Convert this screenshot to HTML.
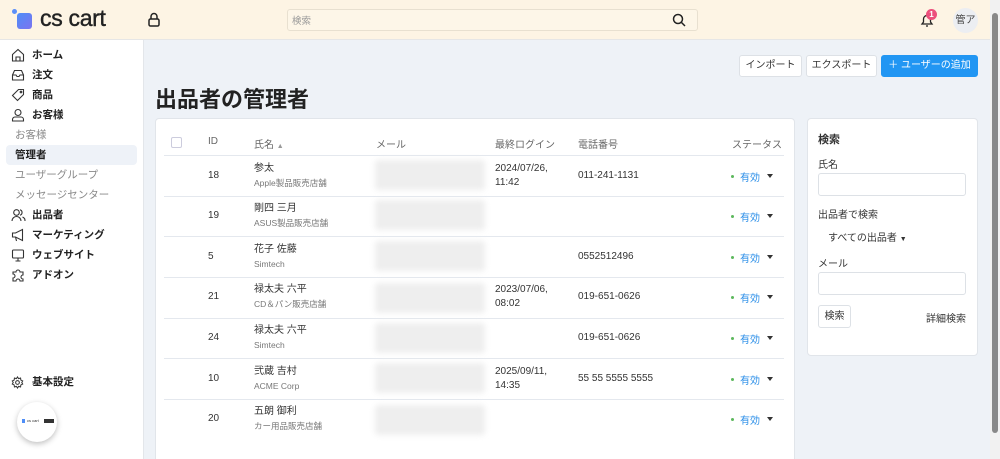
<!DOCTYPE html>
<html style="width:1000px;height:459px;overflow:hidden"><head><meta charset="utf-8">
<style>
*{box-sizing:border-box;margin:0;padding:0}
body{width:1000px;height:459px;overflow:hidden;font-family:"Liberation Sans","Noto Sans CJK JP",sans-serif;background:#eef2f7;color:#333;position:relative;font-size:10px}
.abs{position:absolute}
#hdr{left:0;top:0;width:990px;height:40px;background:#fdf4e4;border-bottom:1px solid #e6e6e6}
#side{left:0;top:40px;width:144px;height:419px;background:#fff;border-right:1px solid #e3e6ea}
.nav{position:absolute;left:32px;font-size:10.5px;font-weight:bold;color:#222;line-height:14px}
.sub{position:absolute;left:15px;font-size:10.5px;color:#888;line-height:14px}
.ic{position:absolute;left:11px}
.card{background:#fff;border:1px solid #e1e5ea;border-radius:4px}
.th{position:absolute;top:136px;font-size:10px;color:#666}
.row{position:absolute;left:164px;width:620px;height:1px;background:#e4e8ee}
.c{position:absolute;font-size:10px;color:#333;line-height:14px}
.s{font-size:8.5px;color:#777}
.blur{position:absolute;left:375px;width:110px;height:30px;background:#eee;filter:blur(3px);border-radius:3px}
.st{position:absolute;left:731px;font-size:10px;color:#2a8ee8}
.st:before{content:"";position:absolute;left:0;top:6px;width:3px;height:3px;border-radius:50%;background:#5cb85c}
.st span{margin-left:9px}
.st i{position:absolute;left:36px;top:5px;border:3px solid transparent;border-top:4px solid #333}
.btn{position:absolute;top:55px;height:22px;background:#fff;border:1px solid #dde1e6;border-radius:3px;font-size:10px;line-height:20px;text-align:center;color:#333}
.inp{position:absolute;left:818px;width:148px;height:23px;border:1px solid #dde1e6;border-radius:3px;background:#fff}
.lbl{position:absolute;left:818px;font-size:10px;color:#333}
</style></head><body>
<div id="hdr" class="abs">
  <div class="abs" style="left:12px;top:9px;width:5px;height:5px;border-radius:50%;background:#5b8ff9"></div>
  <div class="abs" style="left:17px;top:13px;width:15px;height:16px;border-radius:3px;background:linear-gradient(135deg,#4f8ef7,#7b73f0)"></div>
  <div class="abs" style="left:40px;top:5px;font-size:23px;color:#222;letter-spacing:-0.3px;-webkit-text-stroke:0.4px #222">cs cart</div>
  <svg class="abs" style="left:147px;top:12px" width="14" height="16" viewBox="0 0 14 16"><rect x="2" y="7" width="10" height="7" rx="1.5" fill="none" stroke="#222" stroke-width="1.5"/><path d="M4 7V4.5a3 3 0 0 1 6 0V7" fill="none" stroke="#222" stroke-width="1.5"/></svg>
  <div class="abs" style="left:287px;top:9px;width:411px;height:22px;border:1px solid #e8e0d0;border-radius:3px;background:#fdf6e8"></div>
  <div class="abs" style="left:292px;top:13px;font-size:9.5px;color:#999">検索</div>
  <svg class="abs" style="left:672px;top:13px" width="14" height="14" viewBox="0 0 14 14"><circle cx="6" cy="6" r="4.5" fill="none" stroke="#222" stroke-width="1.5"/><path d="M9.5 9.5L13 13" stroke="#222" stroke-width="1.5"/></svg>
  <svg class="abs" style="left:919px;top:12px" width="16" height="16" viewBox="0 0 16 16"><path d="M3 12h10l-1.5-2V7a3.5 3.5 0 0 0-7 0v3z" fill="none" stroke="#222" stroke-width="1.3"/><path d="M7 14h2" stroke="#222" stroke-width="1.3"/></svg>
  <div class="abs" style="left:926px;top:9px;width:11px;height:11px;border-radius:50%;background:#ec4f7c;color:#fff;font-size:8px;text-align:center;line-height:11px;font-weight:bold">1</div>
  <div class="abs" style="left:953px;top:8px;width:25px;height:25px;border-radius:50%;background:#eceef2;font-size:10px;text-align:center;line-height:25px;color:#444">管ア</div>
</div>
<div class="abs" style="left:990px;top:0;width:10px;height:459px;background:#f1f1f1"></div>
<div class="abs" style="left:992px;top:13px;width:6px;height:420px;background:#888;border-radius:3px"></div>

<div id="side" class="abs"></div>
<svg class="ic abs" style="top:48px" width="14" height="14" viewBox="0 0 14 14" fill="none" stroke="#333" stroke-width="1.1"><path d="M1.5 6.5L7 1.5l5.5 5V13h-11z"/><path d="M5 13V9h4v4"/></svg>
<div class="nav" style="top:48px">ホーム</div>
<svg class="ic abs" style="top:68px" width="14" height="14" viewBox="0 0 14 14" fill="none" stroke="#333" stroke-width="1.1"><path d="M1.5 7l2-4.5h7l2 4.5v5h-11z"/><path d="M1.5 7h3.5l1 1.5h2l1-1.5h3.5"/></svg>
<div class="nav" style="top:68px">注文</div>
<svg class="ic abs" style="top:88px" width="14" height="14" viewBox="0 0 14 14" fill="none" stroke="#333" stroke-width="1.1"><path d="M7.5 1.5h5v5l-6 6-5-5z"/><circle cx="10" cy="4" r="0.8"/></svg>
<div class="nav" style="top:88px">商品</div>
<svg class="ic abs" style="top:108px" width="14" height="14" viewBox="0 0 14 14" fill="none" stroke="#333" stroke-width="1.1"><circle cx="7" cy="4.5" r="3"/><path d="M1.5 13v-1.5a2.5 2.5 0 0 1 2.5-2.5h6a2.5 2.5 0 0 1 2.5 2.5V13z"/></svg>
<div class="nav" style="top:108px">お客様</div>
<div class="sub" style="top:128px">お客様</div>
<div class="abs" style="left:6px;top:145px;width:131px;height:20px;background:#eef2f8;border-radius:4px"></div>
<div class="sub" style="top:148px;color:#222;font-weight:bold">管理者</div>
<div class="sub" style="top:168px">ユーザーグループ</div>
<div class="sub" style="top:188px">メッセージセンター</div>
<svg class="ic abs" style="top:208px" width="15" height="14" viewBox="0 0 15 14" fill="none" stroke="#333" stroke-width="1.1"><circle cx="5.5" cy="4.5" r="2.8"/><path d="M1 13a4.5 4.5 0 0 1 9 0"/><path d="M9 1.8a2.8 2.8 0 0 1 0 5.4M11.5 9a4 4 0 0 1 2.5 4"/></svg>
<div class="nav" style="top:208px">出品者</div>
<svg class="ic abs" style="top:228px" width="14" height="14" viewBox="0 0 14 14" fill="none" stroke="#333" stroke-width="1.1"><path d="M1.5 5h3l7-3.5v11l-7-3.5h-3z"/><path d="M4.5 9l1 4"/></svg>
<div class="nav" style="top:228px">マーケティング</div>
<svg class="ic abs" style="top:248px" width="14" height="14" viewBox="0 0 14 14" fill="none" stroke="#333" stroke-width="1.1"><rect x="1.5" y="2" width="11" height="8" rx="1"/><path d="M7 10v3M4.5 13h5"/></svg>
<div class="nav" style="top:248px">ウェブサイト</div>
<svg class="ic abs" style="top:268px" width="14" height="14" viewBox="0 0 14 14" fill="none" stroke="#333" stroke-width="1.1"><path d="M2 4h3a2 2 0 1 1 4 0h3v3a2 2 0 1 0 0 4v2H9a2 2 0 1 0-4 0H2v-3a2 2 0 1 0 0-4z"/></svg>
<div class="nav" style="top:268px">アドオン</div>
<svg class="ic abs" style="top:376px" width="13" height="13" viewBox="0 0 14 14" fill="none" stroke="#333" stroke-width="1.1"><circle cx="7" cy="7" r="2"/><path d="M7 1l1.2 1.8 2.1-.6.3 2.2 2 .9-1 1.7 1 1.7-2 .9-.3 2.2-2.1-.6L7 13l-1.2-1.8-2.1.6-.3-2.2-2-.9 1-1.7-1-1.7 2-.9.3-2.2 2.1.6z"/></svg>
<div class="nav" style="top:375px">基本設定</div>
<div class="abs" style="left:17px;top:402px;width:40px;height:40px;border-radius:50%;background:#fff;box-shadow:0 2px 6px rgba(0,0,0,.25)"></div>
<div class="abs" style="left:22px;top:419px;width:3px;height:4px;background:#4f8ef7"></div>
<div class="abs" style="left:27px;top:418px;font-size:4px;color:#333">cs cart</div>
<div class="abs" style="left:44px;top:419px;width:10px;height:4px;background:#333"></div>

<div class="btn" style="left:739px;width:63px">インポート</div>
<div class="btn" style="left:806px;width:71px">エクスポート</div>
<div class="btn" style="left:881px;width:97px;background:#2196f3;border-color:#2196f3;color:#fff">＋ ユーザーの追加</div>
<div class="abs" style="left:155px;top:82px;font-size:22px;font-weight:bold;color:#222">出品者の管理者</div>

<div class="card abs" style="left:155px;top:118px;width:640px;height:345px"></div>
<div class="abs" style="left:171px;top:137px;width:11px;height:11px;border:1px solid #ccd;border-radius:2px"></div>
<div class="th" style="left:208px">ID</div>
<div class="th" style="left:254px">氏名 <span style="font-size:7px;color:#999">▲</span></div>
<div class="th" style="left:376px">メール</div>
<div class="th" style="left:495px">最終ログイン</div>
<div class="th" style="left:578px">電話番号</div>
<div class="th" style="left:732px">ステータス</div>
<div class="row" style="top:155px"></div>
<div class="row" style="top:196px"></div>
<div class="row" style="top:236px"></div>
<div class="row" style="top:277px"></div>
<div class="row" style="top:318px"></div>
<div class="row" style="top:358px"></div>
<div class="row" style="top:399px"></div>

<div class="c" style="left:208px;top:169px">18</div>
<div class="c" style="left:254px;top:162px">参太<br><span class="s">Apple製品販売店舗</span></div>
<div class="blur" style="top:160px"></div>
<div class="c" style="left:495px;top:162px">2024/07/26,<br>11:42</div>
<div class="c" style="left:578px;top:169px">011-241-1131</div>
<div class="st" style="top:169px"><span>有効</span><i></i></div>

<div class="c" style="left:208px;top:209px">19</div>
<div class="c" style="left:254px;top:202px">剛四 三月<br><span class="s">ASUS製品販売店舗</span></div>
<div class="blur" style="top:200px"></div>
<div class="st" style="top:209px"><span>有効</span><i></i></div>

<div class="c" style="left:208px;top:250px">5</div>
<div class="c" style="left:254px;top:243px">花子 佐藤<br><span class="s">Simtech</span></div>
<div class="blur" style="top:241px"></div>
<div class="c" style="left:578px;top:250px">0552512496</div>
<div class="st" style="top:250px"><span>有効</span><i></i></div>

<div class="c" style="left:208px;top:290px">21</div>
<div class="c" style="left:254px;top:283px">禄太夫 六平<br><span class="s">CD＆パン販売店舗</span></div>
<div class="blur" style="top:283px"></div>
<div class="c" style="left:495px;top:283px">2023/07/06,<br>08:02</div>
<div class="c" style="left:578px;top:290px">019-651-0626</div>
<div class="st" style="top:290px"><span>有効</span><i></i></div>

<div class="c" style="left:208px;top:331px">24</div>
<div class="c" style="left:254px;top:324px">禄太夫 六平<br><span class="s">Simtech</span></div>
<div class="blur" style="top:323px"></div>
<div class="c" style="left:578px;top:331px">019-651-0626</div>
<div class="st" style="top:331px"><span>有効</span><i></i></div>

<div class="c" style="left:208px;top:372px">10</div>
<div class="c" style="left:254px;top:365px">弐蔵 吉村<br><span class="s">ACME Corp</span></div>
<div class="blur" style="top:363px"></div>
<div class="c" style="left:495px;top:365px">2025/09/11,<br>14:35</div>
<div class="c" style="left:578px;top:372px">55 55 5555 5555</div>
<div class="st" style="top:372px"><span>有効</span><i></i></div>

<div class="c" style="left:208px;top:412px">20</div>
<div class="c" style="left:254px;top:405px">五朗 御利<br><span class="s">カー用品販売店舗</span></div>
<div class="blur" style="top:405px"></div>
<div class="st" style="top:412px"><span>有効</span><i></i></div>

<div class="card abs" style="left:807px;top:118px;width:171px;height:238px"></div>
<div class="lbl" style="top:131px;font-weight:bold;font-size:11px">検索</div>
<div class="lbl" style="top:156px">氏名</div>
<div class="inp" style="top:173px"></div>
<div class="lbl" style="top:206px">出品者で検索</div>
<div class="lbl" style="left:828px;top:229px">すべての出品者 <span style="font-size:7px">▼</span></div>
<div class="lbl" style="top:255px">メール</div>
<div class="inp" style="top:272px"></div>
<div class="abs" style="left:818px;top:305px;width:33px;height:23px;border:1px solid #dde1e6;border-radius:3px;font-size:10px;text-align:center;line-height:21px">検索</div>
<div class="abs" style="left:926px;top:310px;font-size:10px;color:#333">詳細検索</div>
</body></html>
